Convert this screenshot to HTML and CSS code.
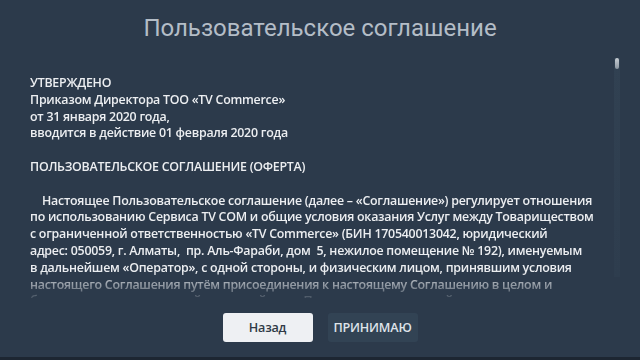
FILE: index.html
```html
<!DOCTYPE html>
<html lang="ru">
<head>
<meta charset="utf-8">
<link rel="stylesheet" href="styles.css">
</head>
<body>
<div class="screen">
  <h1 class="title">Пользовательское соглашение</h1>
  <div class="content">
    <div class="text">
      <p>УТВЕРЖДЕНО<br>Приказом Директора ТОО «TV Commerce»<br>от 31 января 2020 года,<br>вводится в действие 01 февраля 2020 года</p>
      <p>ПОЛЬЗОВАТЕЛЬСКОЕ СОГЛАШЕНИЕ (ОФЕРТА)</p>
      <p class="indent">Настоящее Пользовательское соглашение (далее – «Соглашение») регулирует отношения<br>по использованию Сервиса TV COM и общие условия оказания Услуг между Товариществом<br>с ограниченной ответственностью «TV Commerce» (БИН 170540013042, юридический<br>адрес: 050059, г. Алматы,&nbsp; пр. Аль-Фараби, дом&nbsp; 5, нежилое помещение № 192), именуемым<br>в дальнейшем «Оператор», с одной стороны, и физическим лицом, принявшим условия<br>настоящего Соглашения путём присоединения к настоящему Соглашению в целом и<br>безоговорочно, именуемый в дальнейшем «Пользователь», с другой стороны, далее при</p>
    </div>
    <div class="track"><div class="thumb"></div></div>
  </div>
  <div class="actions">
    <button class="btn btn-back">Назад</button>
    <button class="btn btn-accept">ПРИНИМАЮ</button>
  </div>
  <div class="edge"></div>
</div>
</body>
</html>
```

FILE: styles.css
```css
html, body {
  margin: 0;
  padding: 0;
  background: #2c3a4b;
}
.screen {
  width: 640px;
  height: 360px;
  display: flex;
  flex-direction: column;
  overflow: hidden;
}
.title {
  margin: 0;
  height: 57px;
  line-height: 57px;
  text-align: center;
  font-family: Roboto, "Liberation Sans", sans-serif;
  font-weight: 400;
  font-size: 24px;
  color: #b4bdc7;
}
.content {
  height: 241px;
  display: flex;
}
.text {
  flex: 1;
  padding: 18px 0 0 30px;
  font-family: "Open Sans", "Noto Sans", sans-serif;
  font-weight: 600;
  font-size: 12.4px;
  letter-spacing: -0.25px;
  line-height: 16.8px;
  color: #eceef1;
  white-space: nowrap;
  overflow: hidden;
  -webkit-mask-image: linear-gradient(to bottom, #000 0, #000 214px, rgba(0,0,0,0.6) 226px, rgba(0,0,0,0.15) 241px);
  mask-image: linear-gradient(to bottom, #000 0, #000 214px, rgba(0,0,0,0.6) 226px, rgba(0,0,0,0.15) 241px);
}
.text p {
  margin: 0 0 16.8px 0;
}
.indent {
  text-indent: 12px;
}
.track {
  width: 6px;
  margin: 1px 20px 21px 0;
  background: linear-gradient(to bottom, #314152, #2e3d4e);
}
.thumb {
  height: 11px;
  width: 4px;
  margin-left: 1px;
  border-radius: 2px;
  background: linear-gradient(to bottom, #c8ced4, #8a95a0);
}
.actions {
  flex: 1;
  display: flex;
  justify-content: center;
  gap: 15px;
  padding-top: 15px;
}
.btn {
  width: 90px;
  height: 29px;
  border: none;
  border-radius: 3px;
  font-family: "Open Sans", "Noto Sans", sans-serif;
  font-weight: 600;
  font-size: 12.6px;
  letter-spacing: -0.2px;
  padding: 0;
}
.btn-back {
  background: #eef0f3;
  color: #2f3a46;
}
.btn-accept {
  background: #324354;
  color: #dfe4ea;
}
.edge {
  height: 3px;
  background: #1d2632;
}
```
